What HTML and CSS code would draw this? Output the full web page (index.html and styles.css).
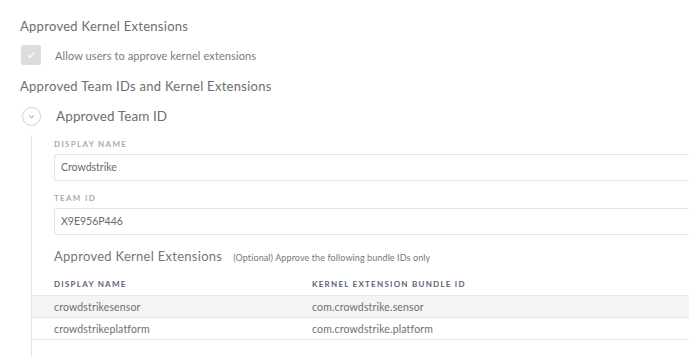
FILE: index.html
```html
<!DOCTYPE html>
<html lang="en">
<head>
    <meta charset="UTF-8">
    <meta name="viewport" content="width=device-width, initial-scale=1.0">
    <title>Approved Kernel Extensions</title>
    <link rel="stylesheet" href="styles.css">
</head>
<body>
    <div class="page">
        <h2 class="section-title">Approved Kernel Extensions</h2>

        <label class="check-row">
            <span class="checkbox">
                <svg width="10" height="8" viewBox="0 0 10 8"><path d="M1.5 4.2 L3.9 6.4 L8.5 1.4" fill="none" stroke="#fff" stroke-width="1.2"/></svg>
            </span>
            <span class="check-label">Allow users to approve kernel extensions</span>
        </label>

        <h2 class="section-title section-gap">Approved Team IDs and Kernel Extensions</h2>

        <div class="team-head">
            <span class="toggle">
                <svg width="19" height="19" viewBox="0 0 19 19">
                    <circle cx="9.5" cy="9.5" r="9" fill="#fff" stroke="#d2d2d2"/>
                    <path d="M7.3 8.6 L9.5 10.6 L11.7 8.6" fill="none" stroke="#8a8a8a" stroke-width="1"/>
                </svg>
            </span>
            <span class="team-title">Approved Team ID</span>
        </div>

        <div class="team-body">
            <div class="field">
                <div class="field-label">Display Name</div>
                <div class="field-input">Crowdstrike</div>
            </div>
            <div class="field">
                <div class="field-label">Team ID</div>
                <div class="field-input">X9E956P446</div>
            </div>

            <div class="kext-head">
                <span class="kext-title">Approved Kernel Extensions</span>
                <span class="kext-note">(Optional) Approve the following bundle IDs only</span>
            </div>

            <div class="kext-table">
                <div class="kext-row kext-header">
                    <div>Display Name</div>
                    <div>Kernel Extension Bundle ID</div>
                </div>
                <div class="kext-row shaded">
                    <div>crowdstrikesensor</div>
                    <div>com.crowdstrike.sensor</div>
                </div>
                <div class="kext-row">
                    <div>crowdstrikeplatform</div>
                    <div>com.crowdstrike.platform</div>
                </div>
            </div>
        </div>
    </div>
</body>
</html>
```

FILE: styles.css
```css
* {
    margin: 0;
    padding: 0;
    box-sizing: border-box;
}

html, body {
    overflow: hidden;
}

body {
    font-family: Lato, "Open Sans", sans-serif;
    background: #fff;
    color: #6e6e6e;
    height: 360px;
}

.page {
    padding: 17px 0 0 20px;
}

.section-title {
    font-size: 13px;
    font-weight: 400;
    line-height: 18px;
    letter-spacing: 0.28px;
    color: #6e6e6e;
}

.section-gap {
    margin-top: 12px;
}

.check-row {
    display: flex;
    align-items: center;
    gap: 14px;
    margin: 10px 0 0 1px;
}

.checkbox {
    width: 20px;
    height: 20px;
    border-radius: 2px;
    background: #dcdcdc;
    display: flex;
    align-items: center;
    justify-content: center;
}

.check-label {
    font-size: 11px;
    letter-spacing: 0.1px;
    color: #7a7a7a;
}

.team-head {
    display: flex;
    align-items: center;
    gap: 15px;
    margin: 11px 0 0 2px;
    height: 20px;
}

.toggle {
    display: flex;
}

.team-title {
    font-size: 13.5px;
    letter-spacing: 0.1px;
    color: #6e6e6e;
}

.team-body {
    margin: 9px -20px 0 11px;
    border-left: 1px solid #e6e6e6;
    padding-left: 22px;
    padding-bottom: 17px;
}

.field {
    padding-top: 3px;
}

.field + .field {
    padding-top: 11px;
}

.field-label {
    font-size: 8px;
    line-height: 12px;
    font-weight: 700;
    letter-spacing: 1.3px;
    text-transform: uppercase;
    color: #ababab;
    margin-bottom: 4px;
}

.field-input {
    height: 27px;
    border: 1px solid #e3e3e3;
    border-right: none;
    border-radius: 3px 0 0 3px;
    padding-left: 6px;
    font-size: 10.5px;
    line-height: 25px;
    color: #6a6a6a;
}

.kext-head {
    margin-top: 12px;
    display: flex;
    align-items: baseline;
    gap: 11px;
    line-height: 18px;
}

.kext-title {
    font-size: 13px;
    letter-spacing: 0.28px;
    color: #767676;
}

.kext-note {
    font-size: 9px;
    letter-spacing: 0.1px;
    color: #777;
}

.kext-table {
    margin-left: -22px;
}

.kext-row {
    display: grid;
    grid-template-columns: 280px 1fr;
    height: 22px;
    align-items: center;
    border-bottom: 1px solid #e6e6e6;
    font-size: 10.5px;
    letter-spacing: 0.15px;
    color: #707070;
}

.kext-row > div:first-child {
    padding-left: 22px;
}

.kext-header {
    height: 29px;
    align-items: end;
    padding-bottom: 5px;
    font-size: 8px;
    line-height: 12px;
    font-weight: 700;
    letter-spacing: 1.25px;
    text-transform: uppercase;
    color: #5d6376;
}

.shaded {
    background: #f4f4f4;
}
```
